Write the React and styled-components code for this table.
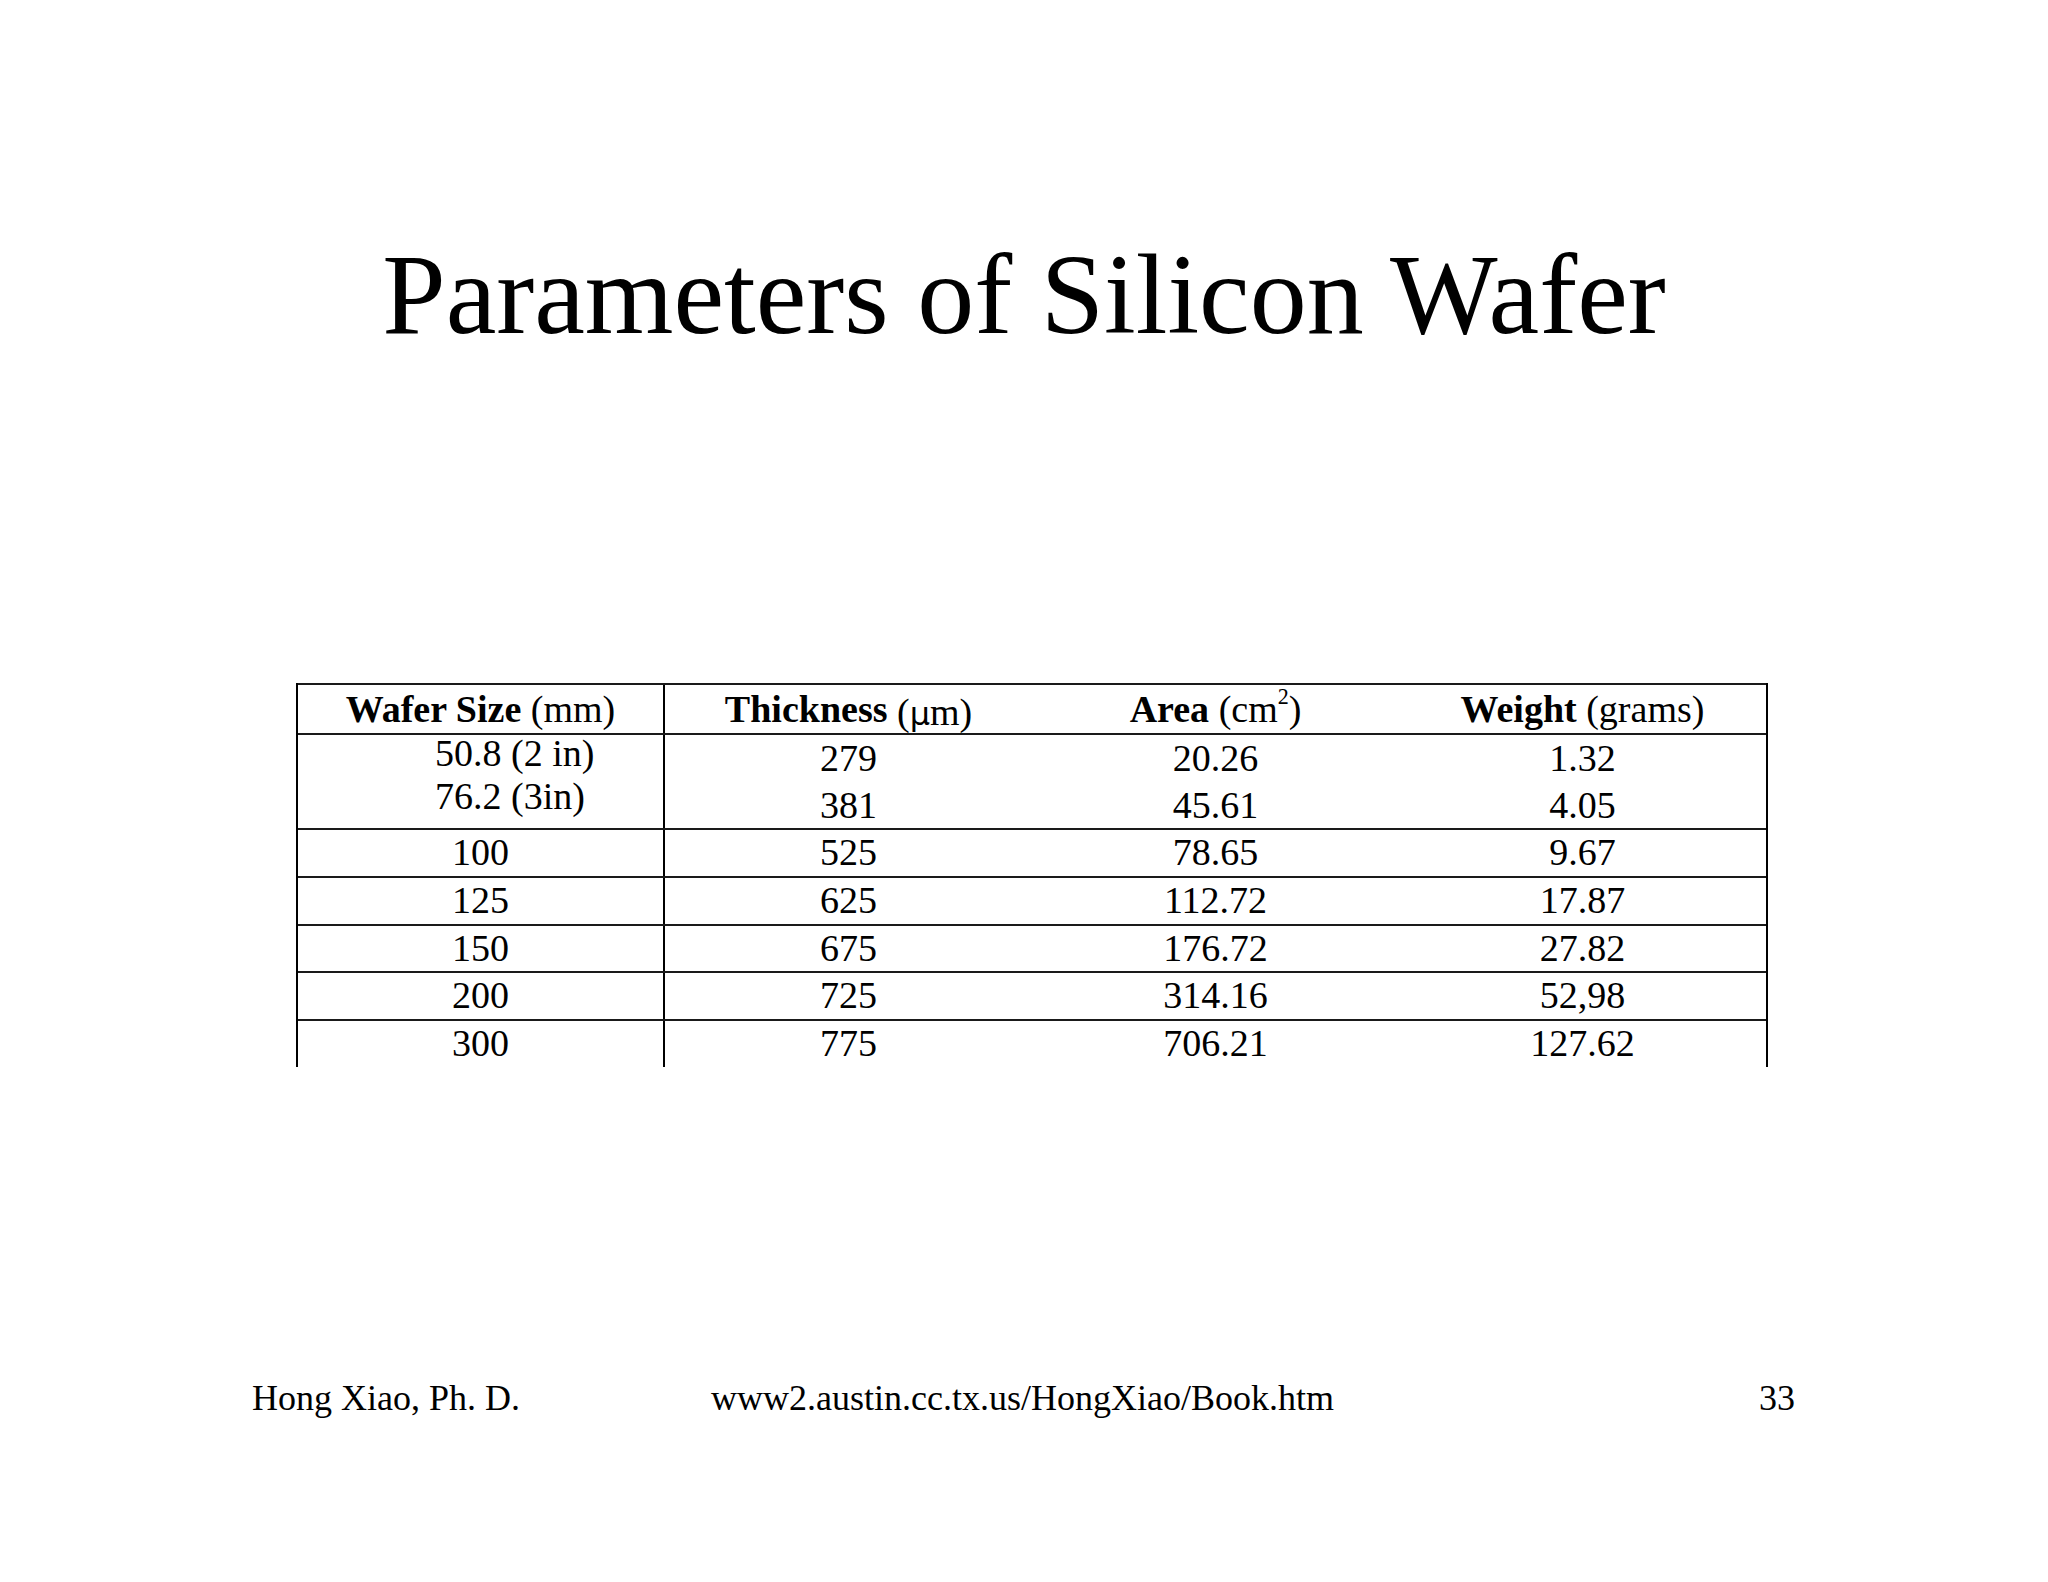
import React from 'react';
import styled, { createGlobalStyle } from 'styled-components';

const GlobalStyle = createGlobalStyle`
  html, body {
    margin: 0;
    padding: 0;
    background: #fff;
  }
  body {
    font-family: "Liberation Serif", "Times New Roman", serif;
    color: #000;
  }
`;

const Slide = styled.div`
  width: 2048px;
  height: 1582px;
  background: #fff;
  display: flex;
  flex-direction: column;
  overflow: hidden;
`;

const Title = styled.h1`
  margin: 238px 0 0;
  font-size: 114px;
  font-weight: 400;
  line-height: 114px;
  text-align: center;
`;

const Table = styled.div`
  margin: 331px 0 0 296px;
  width: 1472px;
  box-sizing: border-box;
  border-left: 2px solid #000;
  border-right: 2px solid #000;
  font-size: 38px;
`;

const Row = styled.div`
  display: grid;
  grid-template-columns: repeat(4, 367px);
  box-sizing: border-box;
  height: ${(p) => (p.$h ? `${p.$h}px` : 'auto')};
  border-top: 2px solid #1a1a1a;
  line-height: ${(p) => p.$lh || 45.8}px;
`;

const Cell = styled.div`
  box-sizing: border-box;
  text-align: ${(p) => (p.$left ? 'left' : 'center')};
  padding-left: ${(p) => (p.$left ? '137px' : '0')};
  border-right: ${(p) => (p.$first ? '2px solid #000' : 'none')};
  white-space: nowrap;
`;

const Lines = styled.div`
  display: flex;
  flex-direction: column;
  line-height: ${(p) => p.$lh}px;
  margin-top: ${(p) => p.$shift || 0}px;
`;

const Unit = styled.span`
  display: inline-block;
  font-weight: 400;
  transform: translateY(${(p) => p.$drop || 0}px);
`;

const Mu = styled.span`
  font-family: "DejaVu Sans", "Liberation Sans", sans-serif;
  font-size: 0.84em;
  line-height: 0;
`;

const Sup = styled.span`
  display: inline-block;
  font-size: 0.58em;
  line-height: 0;
  transform: translateY(-0.8em);
`;

const Footer = styled.div`
  margin: 311px 0 0 252px;
  width: 1543px;
  display: grid;
  grid-template-columns: 459px 1fr auto;
  font-size: 36px;
  line-height: 40px;
`;

const FooterText = styled.span`
  white-space: nowrap;
`;

const rows = [
  ['100', '525', '78.65', '9.67'],
  ['125', '625', '112.72', '17.87'],
  ['150', '675', '176.72', '27.82'],
  ['200', '725', '314.16', '52,98'],
  ['300', '775', '706.21', '127.62'],
];

export default function App() {
  return (
    <>
      <GlobalStyle />
      <Slide>
        <Title>Parameters of Silicon Wafer</Title>

        <Table>
          <Row $h={50} $lh={48}>
            <Cell $first>
              <b>Wafer Size</b> <Unit>(mm)</Unit>
            </Cell>
            <Cell>
              <b>Thickness</b> <Unit $drop={3}>(<Mu>µ</Mu>m)</Unit>
            </Cell>
            <Cell>
              <b>Area</b> <Unit>(cm<Sup>2</Sup>)</Unit>
            </Cell>
            <Cell>
              <b>Weight</b> <Unit>(grams)</Unit>
            </Cell>
          </Row>

          <Row $h={95} $lh={46.5}>
            <Cell $first $left>
              <Lines $lh={43} $shift={-3}>
                <span>50.8 (2 in)</span>
                <span>76.2 (3in)</span>
              </Lines>
            </Cell>
            <Cell>
              <Lines $lh={46.5}>
                <span>279</span>
                <span>381</span>
              </Lines>
            </Cell>
            <Cell>
              <Lines $lh={46.5}>
                <span>20.26</span>
                <span>45.61</span>
              </Lines>
            </Cell>
            <Cell>
              <Lines $lh={46.5}>
                <span>1.32</span>
                <span>4.05</span>
              </Lines>
            </Cell>
          </Row>

          {rows.map((r) => (
            <Row key={r[0]} $lh={45.8}>
              <Cell $first>{r[0]}</Cell>
              <Cell>{r[1]}</Cell>
              <Cell>{r[2]}</Cell>
              <Cell>{r[3]}</Cell>
            </Row>
          ))}
        </Table>

        <Footer>
          <FooterText>Hong Xiao, Ph. D.</FooterText>
          <FooterText>www2.austin.cc.tx.us/HongXiao/Book.htm</FooterText>
          <FooterText>33</FooterText>
        </Footer>
      </Slide>
    </>
  );
}
